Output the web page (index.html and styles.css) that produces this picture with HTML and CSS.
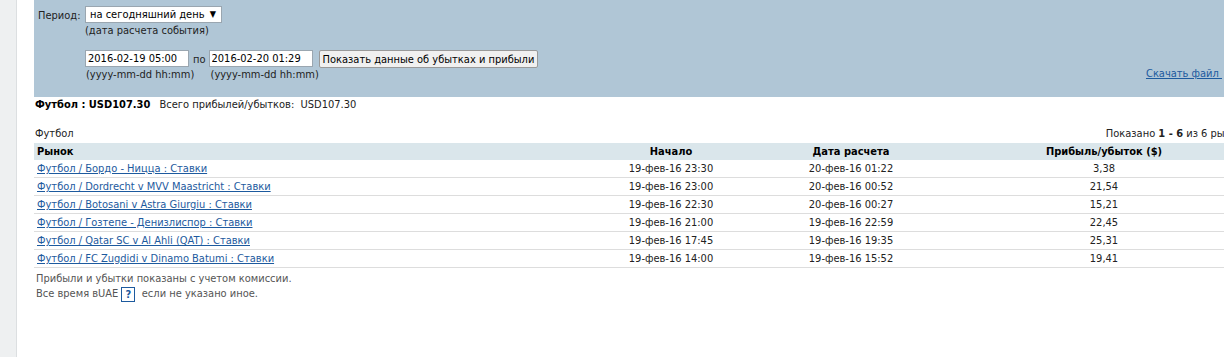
FILE: index.html
```html
<!DOCTYPE html>
<html>
<head>
    <title>Прибыли и убытки</title>
    <link rel="stylesheet" href="styles.css">
</head>
<body>
    <div class="page">
        <div class="sidebar"></div>
        <div class="main">
            <!-- Filter panel -->
            <div class="filter">
                <div class="filter-row">
                    <span class="label">Период:</span>
                    <div class="field">
                        <div class="select">на сегодняшний день <span class="arrow">&#9660;</span></div>
                        <div class="hint">(дата расчета события)</div>
                    </div>
                </div>
                <div class="filter-row dates">
                    <span class="label"></span>
                    <div class="field">
                        <div class="inputs">
                            <div class="date-box">
                                <input class="date" type="text" value="2016-02-19 05:00">
                                <div class="hint">(yyyy-mm-dd hh:mm)</div>
                            </div>
                            <span class="sep">по</span>
                            <div class="date-box">
                                <input class="date" type="text" value="2016-02-20 01:29">
                                <div class="hint">(yyyy-mm-dd hh:mm)</div>
                            </div>
                            <button class="show">Показать данные об убытках и прибыли</button>
                        </div>
                    </div>
                    <a class="download" href="#">Скачать файл&nbsp;</a>
                </div>
            </div>

            <div class="summary">
                <b>Футбол : USD107.30</b>
                <span class="total">Всего прибылей/убытков:&nbsp; USD107.30</span>
            </div>

            <!-- Markets table -->
            <div class="table-head">
                <span>Футбол</span>
                <span class="shown">Показано <b>1 - 6</b> из 6 рынков</span>
            </div>
            <table class="markets">
                <thead>
                    <tr>
                        <th class="market">Рынок</th>
                        <th class="start">Начало</th>
                        <th class="settled">Дата расчета</th>
                        <th class="profit">Прибыль/убыток ($)</th>
                    </tr>
                </thead>
                <tbody>
                    <tr>
                        <td><a href="#">Футбол / Бордо - Ницца : Ставки</a></td>
                        <td>19-фев-16 23:30</td>
                        <td>20-фев-16 01:22</td>
                        <td>3,38</td>
                    </tr>
                    <tr>
                        <td><a href="#">Футбол / Dordrecht v MVV Maastricht : Ставки</a></td>
                        <td>19-фев-16 23:00</td>
                        <td>20-фев-16 00:52</td>
                        <td>21,54</td>
                    </tr>
                    <tr>
                        <td><a href="#">Футбол / Botosani v Astra Giurgiu : Ставки</a></td>
                        <td>19-фев-16 22:30</td>
                        <td>20-фев-16 00:27</td>
                        <td>15,21</td>
                    </tr>
                    <tr>
                        <td><a href="#">Футбол / Гозтепе - Денизлиспор : Ставки</a></td>
                        <td>19-фев-16 21:00</td>
                        <td>19-фев-16 22:59</td>
                        <td>22,45</td>
                    </tr>
                    <tr>
                        <td><a href="#">Футбол / Qatar SC v Al Ahli (QAT) : Ставки</a></td>
                        <td>19-фев-16 17:45</td>
                        <td>19-фев-16 19:35</td>
                        <td>25,31</td>
                    </tr>
                    <tr>
                        <td><a href="#">Футбол / FC Zugdidi v Dinamo Batumi : Ставки</a></td>
                        <td>19-фев-16 14:00</td>
                        <td>19-фев-16 15:52</td>
                        <td>19,41</td>
                    </tr>
                </tbody>
            </table>

            <div class="notes">
                <p>Прибыли и убытки показаны с учетом комиссии.</p>
                <p>Все время вUAE <span class="help">?</span>&nbsp; если не указано иное.</p>
            </div>
        </div>
    </div>
</body>
</html>
```

FILE: styles.css
```css
body {
    margin: 0;
    font-family: Tahoma, "DejaVu Sans Condensed", "Liberation Sans", sans-serif;
    font-size: 11px;
    color: #333;
    background: #fff;
    overflow: hidden;
}
.page {
    display: flex;
    min-height: 357px;
    width: 1320px;
}
.sidebar {
    width: 16px;
    background-color: #eef0f1;
    border-right: 1px solid #dcdfe1;
}
.main {
    padding-left: 17px;
    flex: 1;
}
.filter {
    width: 1190px;
    height: 97px;
    box-sizing: border-box;
    background-color: #b0c6d6;
    padding: 6px 2px 0 4px;
    color: #222;
}
.filter-row {
    display: flex;
}
.filter-row .label {
    width: 47px;
    padding-top: 3px;
}
.select {
    width: 131px;
    height: 15px;
    line-height: 15px;
    background: #fff;
    border: 1px solid #9aa6b0;
    padding-left: 4px;
    color: #000;
    position: relative;
}
.select .arrow {
    position: absolute;
    right: 5px;
    top: 0;
    font-size: 9px;
}
.hint {
    margin-top: 1px;
    line-height: 13px;
    white-space: nowrap;
}
.dates {
    margin-top: 13px;
    align-items: flex-end;
}
.dates .field {
    flex: 1;
}
.inputs {
    display: flex;
    align-items: flex-start;
}
.date-box {
    width: 105px;
}
.date {
    width: 100px;
    height: 15px;
    box-sizing: content-box;
    border: 1px solid #9aa6b0;
    padding: 0 0 0 2px;
    margin: 0;
    font: inherit;
    color: #000;
}
.date-box:first-child .hint {
    margin-left: 1px;
}
.date-box:nth-child(3) .hint {
    margin-left: 2px;
}
.sep {
    padding: 3px 3px 0 3px;
}
.show {
    margin-left: 5px;
    height: 18px;
    padding: 0 3px;
    font: inherit;
    color: #000;
    background: #f0f0f0;
    border: 1px solid #999;
    border-radius: 2px;
}
.download {
    color: #1d5a9e;
    margin-bottom: 1px;
}
.summary {
    padding: 1px 0 0 1px;
    color: #000;
    height: 28px;
}
.summary .total {
    margin-left: 6px;
    color: #222;
}
.table-head {
    display: flex;
    justify-content: space-between;
    width: 1186px;
    padding: 1px 0 0 1px;
    color: #222;
    line-height: 14px;
    height: 16px;
}
.table-head .shown {
    margin-right: -28px;
    white-space: nowrap;
}
.markets {
    border-collapse: collapse;
    width: 1233px;
}
.markets th {
    background-color: #dae6eb;
    color: #000;
    height: 17px;
    padding: 0 3px;
    text-align: center;
}
.markets th.market {
    text-align: left;
}
.markets td {
    height: 17px;
    padding: 0 3px;
    border-bottom: 1px solid #dddddd;
    text-align: center;
    color: #222;
}
.markets td:first-child {
    text-align: left;
}
.market { width: 541px; }
.start { width: 174px; }
.settled { width: 174px; }
.markets a {
    color: #1d5a9e;
}
.notes {
    padding: 3px 0 0 2px;
    color: #555;
}
.notes p {
    margin: 0;
    line-height: 15px;
}
.help {
    display: inline-block;
    width: 12px;
    height: 13px;
    line-height: 13px;
    text-align: center;
    border: 1px solid #1d5a9e;
    color: #1d5a9e;
    font-weight: bold;
    vertical-align: middle;
}
```
